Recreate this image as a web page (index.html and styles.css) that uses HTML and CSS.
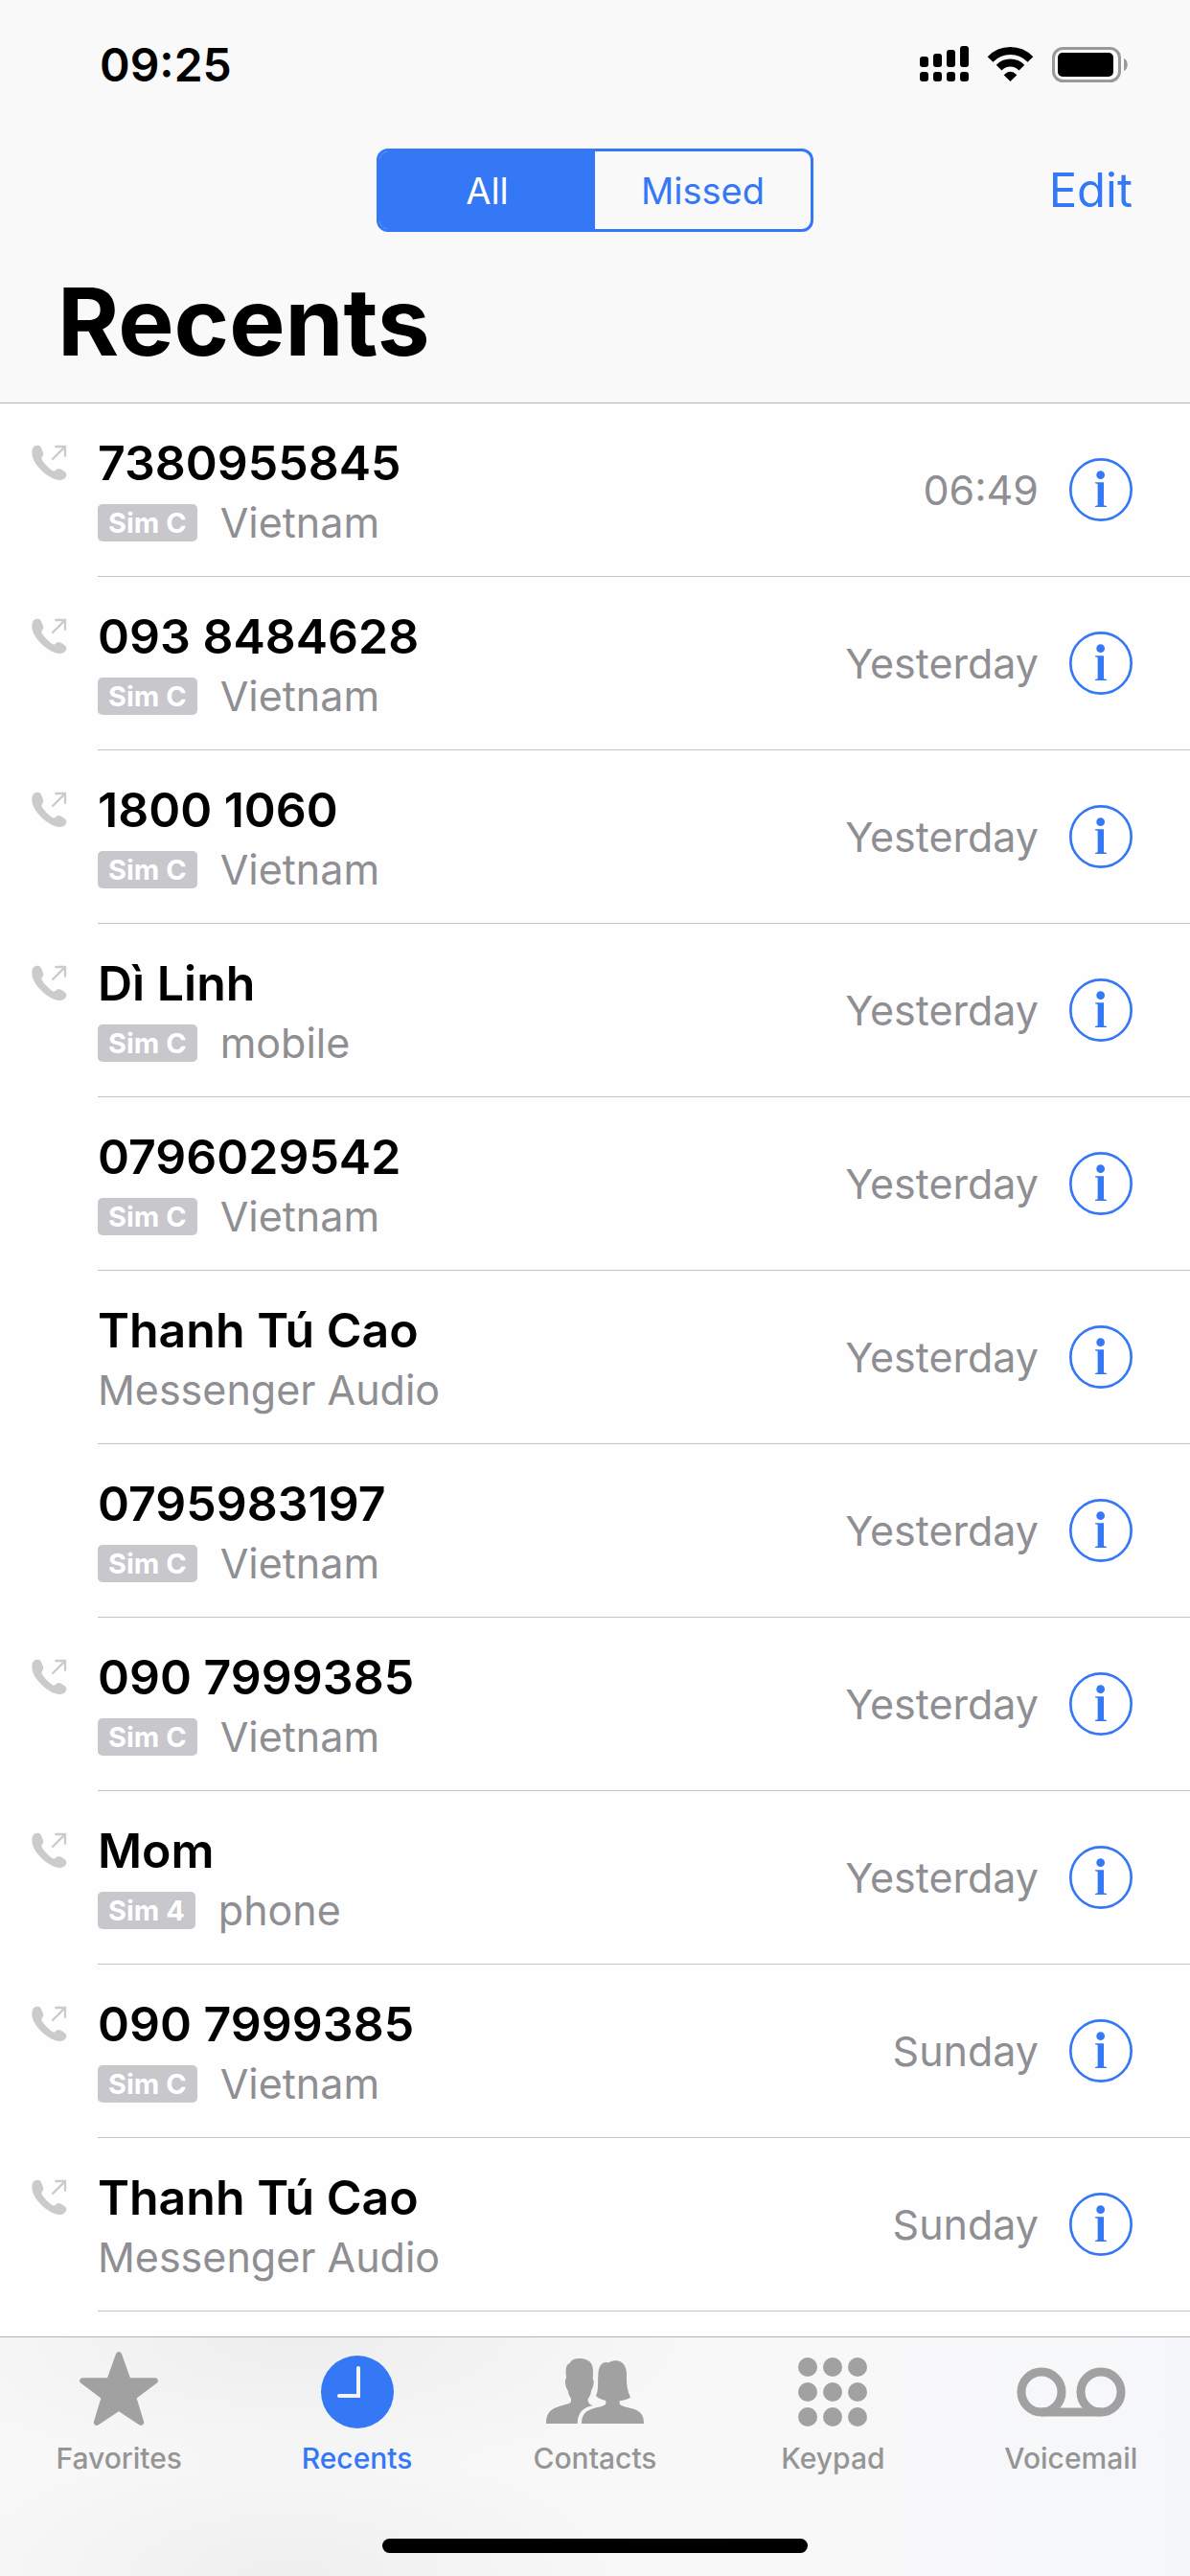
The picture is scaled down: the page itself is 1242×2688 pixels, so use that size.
FILE: index.html
```html
<!DOCTYPE html>
<html lang="en">
<head>
<meta charset="UTF-8" />
<meta name="viewport" content="width=device-width, initial-scale=1" />
<title>Recents</title>
<link rel="stylesheet" href="styles.css">
</head>
<body>

<!-- Shared icons -->
<svg class="sprite" aria-hidden="true">
  <symbol id="icon-outgoing" viewBox="36 42 114 114">
    <path fill="currentColor" d="M46 48C51 44 62 43 65 46C69 50 73 61 76 70C77 75 71 80 70 86C73 96 95 118 108 125C113 125 116 118 123 117C130 117 143 126 147 131C150 138 146 147 137 151C130 154 121 153 112 150C86 141 59 116 47 93C40 80 36 58 46 48Z"/>
    <path fill="none" stroke="currentColor" stroke-width="7" stroke-linecap="round" d="M105 87L143 49M115 48H144V77"/>
  </symbol>
  <symbol id="icon-info" viewBox="33 36 198 198">
    <circle cx="132" cy="135" r="95" fill="none" stroke="currentColor" stroke-width="8"/>
    <circle cx="131" cy="89" r="13" fill="currentColor"/>
    <path fill="currentColor" d="M114 112H141V184L150 186V189H114V186L122 184V117L114 115Z"/>
  </symbol>
</svg>

<header class="header">
  <div class="status-bar">
    <span class="time">09:25</span>
    <div class="status-icons">
      <svg width="51" height="38" viewBox="0 0 51 38" aria-hidden="true">
        <rect x="0" y="11" width="9" height="11" rx="3"/>
        <rect x="14" y="8" width="9" height="14" rx="3"/>
        <rect x="28" y="4" width="9" height="18" rx="3"/>
        <rect x="42" y="0" width="9" height="22" rx="3"/>
        <rect x="0" y="27" width="9" height="10" rx="3"/>
        <rect x="14" y="27" width="9" height="10" rx="3"/>
        <rect x="28" y="27" width="9" height="10" rx="3"/>
        <rect x="42" y="27" width="9" height="10" rx="3"/>
      </svg>
      <svg width="49" height="38" viewBox="0 -1 49 38" aria-hidden="true">
        <path fill="none" stroke="#000" stroke-width="8" d="M3.6 12.9A29 29 0 0 1 45.4 12.9M12.6 21.6A16.6 16.6 0 0 1 36.4 21.6"/>
        <path d="M24.5 36L17.7 29.2Q24.5 22.5 31.3 29.2Z"/>
      </svg>
      <svg width="80" height="38" viewBox="0 -1 80 38" aria-hidden="true">
        <rect x="1.5" y="1.5" width="69" height="34" rx="10" fill="none" stroke="#999" stroke-width="3"/>
        <rect x="6" y="6" width="58" height="25" rx="5"/>
        <path fill="#999" d="M75 12C80 14 80 23 75 25Z"/>
      </svg>
    </div>
  </div>

  <div class="nav-bar">
    <div class="segmented" role="group" aria-label="Filter calls">
      <button type="button" class="segment active" aria-pressed="true">All</button>
      <button type="button" class="segment" aria-pressed="false">Missed</button>
    </div>
    <button type="button" class="edit-btn">Edit</button>
  </div>

  <h1>Recents</h1>
</header>

<main>
  <ul class="calls">
    <li class="call">
      <svg class="outgoing" aria-hidden="true"><use href="#icon-outgoing"/></svg>
      <div class="call-body">
        <div class="call-info">
          <div class="name">7380955845</div>
          <div class="detail"><span class="sim">Sim C</span>Vietnam</div>
        </div>
        <span class="date">06:49</span>
        <button type="button" class="info-btn" aria-label="Info"><svg aria-hidden="true"><use href="#icon-info"/></svg></button>
      </div>
    </li>
    <li class="call">
      <svg class="outgoing" aria-hidden="true"><use href="#icon-outgoing"/></svg>
      <div class="call-body">
        <div class="call-info">
          <div class="name">093 8484628</div>
          <div class="detail"><span class="sim">Sim C</span>Vietnam</div>
        </div>
        <span class="date">Yesterday</span>
        <button type="button" class="info-btn" aria-label="Info"><svg aria-hidden="true"><use href="#icon-info"/></svg></button>
      </div>
    </li>
    <li class="call">
      <svg class="outgoing" aria-hidden="true"><use href="#icon-outgoing"/></svg>
      <div class="call-body">
        <div class="call-info">
          <div class="name">1800 1060</div>
          <div class="detail"><span class="sim">Sim C</span>Vietnam</div>
        </div>
        <span class="date">Yesterday</span>
        <button type="button" class="info-btn" aria-label="Info"><svg aria-hidden="true"><use href="#icon-info"/></svg></button>
      </div>
    </li>
    <li class="call">
      <svg class="outgoing" aria-hidden="true"><use href="#icon-outgoing"/></svg>
      <div class="call-body">
        <div class="call-info">
          <div class="name">Dì Linh</div>
          <div class="detail"><span class="sim">Sim C</span>mobile</div>
        </div>
        <span class="date">Yesterday</span>
        <button type="button" class="info-btn" aria-label="Info"><svg aria-hidden="true"><use href="#icon-info"/></svg></button>
      </div>
    </li>
    <li class="call">
      <div class="call-body">
        <div class="call-info">
          <div class="name">0796029542</div>
          <div class="detail"><span class="sim">Sim C</span>Vietnam</div>
        </div>
        <span class="date">Yesterday</span>
        <button type="button" class="info-btn" aria-label="Info"><svg aria-hidden="true"><use href="#icon-info"/></svg></button>
      </div>
    </li>
    <li class="call">
      <div class="call-body">
        <div class="call-info">
          <div class="name">Thanh Tú Cao</div>
          <div class="detail">Messenger Audio</div>
        </div>
        <span class="date">Yesterday</span>
        <button type="button" class="info-btn" aria-label="Info"><svg aria-hidden="true"><use href="#icon-info"/></svg></button>
      </div>
    </li>
    <li class="call">
      <div class="call-body">
        <div class="call-info">
          <div class="name">0795983197</div>
          <div class="detail"><span class="sim">Sim C</span>Vietnam</div>
        </div>
        <span class="date">Yesterday</span>
        <button type="button" class="info-btn" aria-label="Info"><svg aria-hidden="true"><use href="#icon-info"/></svg></button>
      </div>
    </li>
    <li class="call">
      <svg class="outgoing" aria-hidden="true"><use href="#icon-outgoing"/></svg>
      <div class="call-body">
        <div class="call-info">
          <div class="name">090 7999385</div>
          <div class="detail"><span class="sim">Sim C</span>Vietnam</div>
        </div>
        <span class="date">Yesterday</span>
        <button type="button" class="info-btn" aria-label="Info"><svg aria-hidden="true"><use href="#icon-info"/></svg></button>
      </div>
    </li>
    <li class="call">
      <svg class="outgoing" aria-hidden="true"><use href="#icon-outgoing"/></svg>
      <div class="call-body">
        <div class="call-info">
          <div class="name">Mom</div>
          <div class="detail"><span class="sim">Sim 4</span>phone</div>
        </div>
        <span class="date">Yesterday</span>
        <button type="button" class="info-btn" aria-label="Info"><svg aria-hidden="true"><use href="#icon-info"/></svg></button>
      </div>
    </li>
    <li class="call">
      <svg class="outgoing" aria-hidden="true"><use href="#icon-outgoing"/></svg>
      <div class="call-body">
        <div class="call-info">
          <div class="name">090 7999385</div>
          <div class="detail"><span class="sim">Sim C</span>Vietnam</div>
        </div>
        <span class="date">Sunday</span>
        <button type="button" class="info-btn" aria-label="Info"><svg aria-hidden="true"><use href="#icon-info"/></svg></button>
      </div>
    </li>
    <li class="call">
      <svg class="outgoing" aria-hidden="true"><use href="#icon-outgoing"/></svg>
      <div class="call-body">
        <div class="call-info">
          <div class="name">Thanh Tú Cao</div>
          <div class="detail">Messenger Audio</div>
        </div>
        <span class="date">Sunday</span>
        <button type="button" class="info-btn" aria-label="Info"><svg aria-hidden="true"><use href="#icon-info"/></svg></button>
      </div>
    </li>
  </ul>
</main>

<footer class="tab-bar">
  <nav class="tabs">
    <a href="#favorites" class="tab">
      <svg width="84" height="84" viewBox="66 42 252 252" aria-hidden="true">
        <path stroke-width="19" stroke-linejoin="round" stroke="currentColor" d="M192 52L221 133H305L237 184L261 263L192 217L123 263L147 184L79 133H163Z"/>
      </svg>
      Favorites
    </a>
    <a href="#recents" class="tab active" aria-current="page">
      <svg width="84" height="84" viewBox="0 0 84 84" aria-hidden="true">
        <circle cx="42" cy="42" r="38"/>
        <path fill="none" stroke="#f3f3f4" stroke-width="4" stroke-linecap="round" d="M43 17V46H23"/>
      </svg>
      Recents
    </a>
    <a href="#contacts" class="tab">
      <svg width="102" height="84" viewBox="27 27 306 252" aria-hidden="true">
        <path d="M27 252C27 222 38 208 62 200C84 192 105 192 105 181V173C99 166 96 156 95 148C89 141 86 126 87 115C90 111 90 108 90 105C88 86 88 72 96 65C101 64 104 58 108 54C124 44 158 47 169 65C176 78 174 98 173 112C179 120 175 137 169 147C167 158 165 166 158 174V180C158 188 165 193 174 196C142 200 125 220 125 252Z"/>
        <path d="M138 252C138 225 149 213 170 206C188 200 214 198 214 189V180C203 178 191 174 183 165C192 147 188 124 190 101C191 76 198 60 215 60C220 60 221 63 225 60C235 54 252 52 263 60C276 69 280 86 279 105C278 129 282 151 291 170C282 176 270 179 257 181V189C260 199 285 201 303 207C324 214 333 228 333 252Z"/>
      </svg>
      Contacts
    </a>
    <a href="#keypad" class="tab">
      <svg width="74" height="84" viewBox="0 0 74 84" aria-hidden="true">
        <circle cx="11" cy="16" r="10"/><circle cx="37" cy="16" r="10"/><circle cx="63" cy="16" r="10"/>
        <circle cx="11" cy="42" r="10"/><circle cx="37" cy="42" r="10"/><circle cx="63" cy="42" r="10"/>
        <circle cx="11" cy="68" r="10"/><circle cx="37" cy="68" r="10"/><circle cx="63" cy="68" r="10"/>
      </svg>
      Keypad
    </a>
    <a href="#voicemail" class="tab">
      <svg width="114" height="84" viewBox="0 0 114 84" aria-hidden="true">
        <g fill="none" stroke="currentColor" stroke-width="9">
          <circle cx="26" cy="42" r="21"/>
          <circle cx="88" cy="42" r="21"/>
          <path d="M26 63H88"/>
        </g>
      </svg>
      Voicemail
    </a>
  </nav>
  <div class="home-indicator"></div>
</footer>

</body>
</html>
```
FILE: styles.css
```css
/* Reset */
* {
  box-sizing: border-box;
}

body {
  font-family: Inter, 'Liberation Sans', sans-serif;
  margin: 0;
  min-height: 100vh;
  display: flex;
  flex-direction: column;
  background: #fefefe;
  color: #000;
}

button {
  font-family: inherit;
  margin: 0;
  padding: 0;
  border: none;
  background: none;
  color: #3478f6;
  cursor: pointer;
}

svg {
  display: block;
}

.sprite {
  display: none;
}

/* Header */
.header {
  background: #f9f9f9;
  border-bottom: 1px solid #b2b2b2;
  padding-bottom: 26px;
}

.status-bar {
  display: flex;
  justify-content: space-between;
  align-items: center;
  height: 134px;
  padding: 0 64px 0 104px;
}

.time {
  font-size: 48px;
  font-weight: 600;
}

.status-icons {
  display: flex;
  gap: 19px;
}

.nav-bar {
  display: grid;
  grid-template-columns: 1fr 456px 1fr;
  align-items: center;
  margin-top: 21px;
  padding: 0 60px;
}

.segmented {
  grid-column: 2;
  display: flex;
  height: 87px;
  border: 3px solid #3478f6;
  border-radius: 12px;
  overflow: hidden;
}

.segment {
  flex: 1;
  font-size: 38px;
}

.segment.active {
  background: #3478f6;
  color: #fff;
}

.edit-btn {
  justify-self: end;
  font-size: 49px;
}

h1 {
  margin: 36px 0 0;
  padding: 0 60px;
  font-size: 98px;
  font-weight: 700;
  line-height: 116px;
}

/* Call list */
main {
  flex: 1;
}

.calls {
  list-style: none;
  margin: 0;
  padding: 0;
}

.call {
  display: grid;
  grid-template-columns: 102px 1fr;
}

.outgoing {
  width: 38px;
  height: 38px;
  margin: 43px 0 0 32px;
  color: #cbcbcb;
}

.call-body {
  grid-column: 2;
  display: flex;
  align-items: center;
  padding-right: 60px;
  border-bottom: 1px solid #c6c6c8;
}

.call-info {
  flex: 1;
  padding: 32px 0 24px;
}

.name {
  font-size: 50px;
  font-weight: 600;
  line-height: 60px;
}

.detail {
  display: flex;
  align-items: center;
  gap: 24px;
  font-size: 43px;
  line-height: 64px;
  color: #8e8e93;
}

.sim {
  padding: 0 11px;
  border-radius: 5px;
  background: #c7c7cc;
  color: #fff;
  font-size: 29px;
  font-weight: 700;
  line-height: 39px;
}

.date {
  font-size: 43px;
  color: #8e8e93;
}

.info-btn {
  margin-left: 32px;
}

.info-btn svg {
  width: 66px;
  height: 66px;
}

/* Tab bar */
.tab-bar {
  padding: 15px 0 24px;
  border-top: 1px solid #b2b2b2;
  background:
    radial-gradient(ellipse 35% 60% at 25% 0%, #eeeeef, transparent),
    radial-gradient(ellipse 30% 60% at 24% 100%, #efeff0, transparent),
    linear-gradient(90deg, #f8f8f8 60%, #f6f7fa);
}

.tabs {
  display: grid;
  grid-template-columns: repeat(5, 1fr);
}

.tab {
  display: flex;
  flex-direction: column;
  align-items: center;
  gap: 8px;
  font-size: 30px;
  font-weight: 500;
  line-height: 38px;
  color: #959595;
  text-decoration: none;
}

.tab svg {
  color: #a1a1a1;
  fill: currentColor;
}

.tab.active,
.tab.active svg {
  color: #3478f6;
}

.home-indicator {
  width: 444px;
  height: 15px;
  margin: 65px auto 0;
  border-radius: 8px;
  background: #000;
}
```
